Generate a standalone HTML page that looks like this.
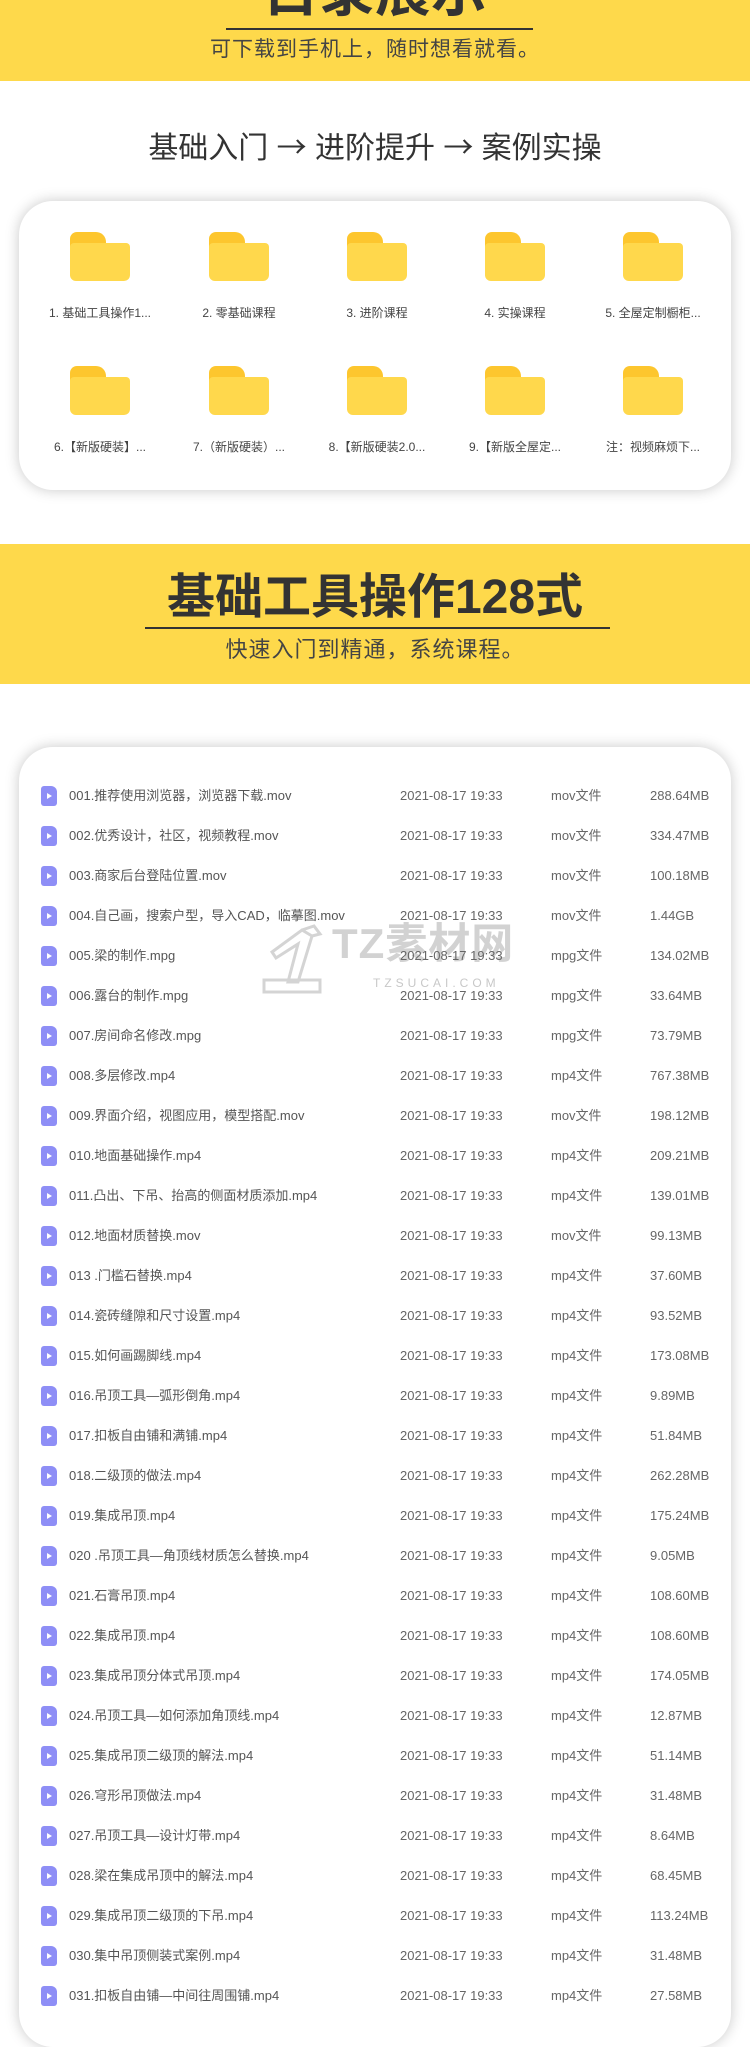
<!DOCTYPE html>
<html><head><meta charset="utf-8">
<style>
*{margin:0;padding:0;box-sizing:border-box}
body{width:750px;height:2000px;overflow:hidden;background:#fff;font-family:"Liberation Sans","Noto Sans CJK SC",sans-serif;position:relative}
.abs{position:absolute}
.band{position:absolute;left:0;width:750px;background:#fed94b}
.c{position:absolute;left:0;width:750px;text-align:center;white-space:nowrap}
.card{position:absolute;left:19px;width:712px;background:#fff;border-radius:34px;box-shadow:0 0 14px rgba(0,0,0,0.22)}
.fold{position:absolute;width:60px;height:49px}
.fold .tab{position:absolute;left:0;top:0;width:36px;height:20px;background:#fdc62e;border-radius:7px 10px 0 0}
.fold .bd{position:absolute;left:0;top:11px;width:60px;height:38px;background:#ffd84c;border-radius:4px 4px 6px 6px}
.lbl{position:absolute;width:130px;text-align:center;font-size:12px;color:#444;white-space:nowrap}
.row{position:absolute;left:0;width:750px;height:20px;font-size:13px;color:#555;white-space:nowrap}
.row span{position:absolute;top:0;line-height:20px}
.ic{position:absolute;left:41px;top:0;width:16px;height:20px;background:#8e8ef6;border-radius:3px 6px 3px 3px}
.ic:after{content:"";position:absolute;left:6px;top:7px;border-left:5px solid #fff;border-top:3px solid transparent;border-bottom:3px solid transparent}
.ar{font-family:"Noto Sans CJK SC",sans-serif}
</style></head><body>
<div class="band" style="top:0;height:81px"></div>
<div class="c" style="top:-38px;font-size:56px;font-weight:bold;color:#333;line-height:60px">目录展示</div>
<div class="abs" style="left:226px;top:28px;width:307px;height:2px;background:#333"></div>
<div class="c" style="top:37px;font-size:21px;color:#444;line-height:26px;letter-spacing:1px">可下载到手机上，随时想看就看。</div>
<div class="c" style="top:125px;font-size:30px;color:#333;line-height:40px">基础入门 <span class="ar">→</span> 进阶提升 <span class="ar">→</span> 案例实操</div>

<div class="card" style="top:201px;height:289px"></div>
<div id="f"></div>

<div class="band" style="top:544px;height:140px"></div>
<div class="c" style="top:566px;font-size:48px;font-weight:bold;color:#333;line-height:64px">基础工具操作128式</div>
<div class="abs" style="left:145px;top:627px;width:465px;height:2px;background:#333"></div>
<div class="c" style="top:636px;font-size:22px;color:#444;line-height:28px;letter-spacing:1px">快速入门到精通，系统课程。</div>

<div class="card" style="top:747px;height:1300px"></div>
<svg class="abs" style="left:262px;top:922px" width="62" height="78" viewBox="0 0 62 78"><g fill="none" stroke="#d4d4d4" stroke-width="3"><path d="M10 30 L40 8 L50 14 L36 60 L26 60 L36 22 L14 36 Z"/><path d="M2 58 L58 58 L58 70 L2 70 Z"/><path d="M40 8 L52 4 L58 12 L50 14"/></g></svg>
<div class="abs" style="left:332px;top:920px;font-size:42px;font-weight:bold;color:#d2d2d2;letter-spacing:1px;line-height:48px">TZ素材网</div>
<div class="abs" style="left:373px;top:976px;font-size:12px;color:#c8c8c8;letter-spacing:4px">TZSUCAI.COM</div>
<div id="rows"></div>
<script>
var cx=[100,239,377,515,653];
var l1=["1. 基础工具操作1...","2. 零基础课程","3. 进阶课程","4. 实操课程","5. 全屋定制橱柜..."];
var l2=["6.【新版硬装】...","7.（新版硬装）...","8.【新版硬装2.0...","9.【新版全屋定...","注：视频麻烦下..."];
var h="";
for(var i=0;i<5;i++){
h+='<div class="fold" style="left:'+(cx[i]-30)+'px;top:232px"><div class="tab"></div><div class="bd"></div></div>';
h+='<div class="lbl" style="left:'+(cx[i]-65)+'px;top:304px">'+l1[i]+'</div>';
h+='<div class="fold" style="left:'+(cx[i]-30)+'px;top:366px"><div class="tab"></div><div class="bd"></div></div>';
h+='<div class="lbl" style="left:'+(cx[i]-65)+'px;top:438px">'+l2[i]+'</div>';
}
document.getElementById("f").innerHTML=h;
var r=[["001.推荐使用浏览器，浏览器下载.mov","mov","288.64MB"],["002.优秀设计，社区，视频教程.mov","mov","334.47MB"],["003.商家后台登陆位置.mov","mov","100.18MB"],["004.自己画，搜索户型，导入CAD，临摹图.mov","mov","1.44GB"],["005.梁的制作.mpg","mpg","134.02MB"],["006.露台的制作.mpg","mpg","33.64MB"],["007.房间命名修改.mpg","mpg","73.79MB"],["008.多层修改.mp4","mp4","767.38MB"],["009.界面介绍，视图应用，模型搭配.mov","mov","198.12MB"],["010.地面基础操作.mp4","mp4","209.21MB"],["011.凸出、下吊、抬高的侧面材质添加.mp4","mp4","139.01MB"],["012.地面材质替换.mov","mov","99.13MB"],["013 .门槛石替换.mp4","mp4","37.60MB"],["014.瓷砖缝隙和尺寸设置.mp4","mp4","93.52MB"],["015.如何画踢脚线.mp4","mp4","173.08MB"],["016.吊顶工具—弧形倒角.mp4","mp4","9.89MB"],["017.扣板自由铺和满铺.mp4","mp4","51.84MB"],["018.二级顶的做法.mp4","mp4","262.28MB"],["019.集成吊顶.mp4","mp4","175.24MB"],["020 .吊顶工具—角顶线材质怎么替换.mp4","mp4","9.05MB"],["021.石膏吊顶.mp4","mp4","108.60MB"],["022.集成吊顶.mp4","mp4","108.60MB"],["023.集成吊顶分体式吊顶.mp4","mp4","174.05MB"],["024.吊顶工具—如何添加角顶线.mp4","mp4","12.87MB"],["025.集成吊顶二级顶的解法.mp4","mp4","51.14MB"],["026.穹形吊顶做法.mp4","mp4","31.48MB"],["027.吊顶工具—设计灯带.mp4","mp4","8.64MB"],["028.梁在集成吊顶中的解法.mp4","mp4","68.45MB"],["029.集成吊顶二级顶的下吊.mp4","mp4","113.24MB"],["030.集中吊顶侧装式案例.mp4","mp4","31.48MB"],["031.扣板自由铺—中间往周围铺.mp4","mp4","27.58MB"]];
h="";
for(var j=0;j<r.length;j++){
var y=786+j*40;
h+='<div class="row" style="top:'+y+'px"><div class="ic"></div><span style="left:69px">'+r[j][0]+'</span><span style="left:400px;color:#666">2021-08-17 19:33</span><span style="left:551px;color:#666">'+r[j][1]+'文件</span><span style="left:650px;color:#666">'+r[j][2]+'</span></div>';
}
document.getElementById("rows").innerHTML=h;
</script>
</body></html>
